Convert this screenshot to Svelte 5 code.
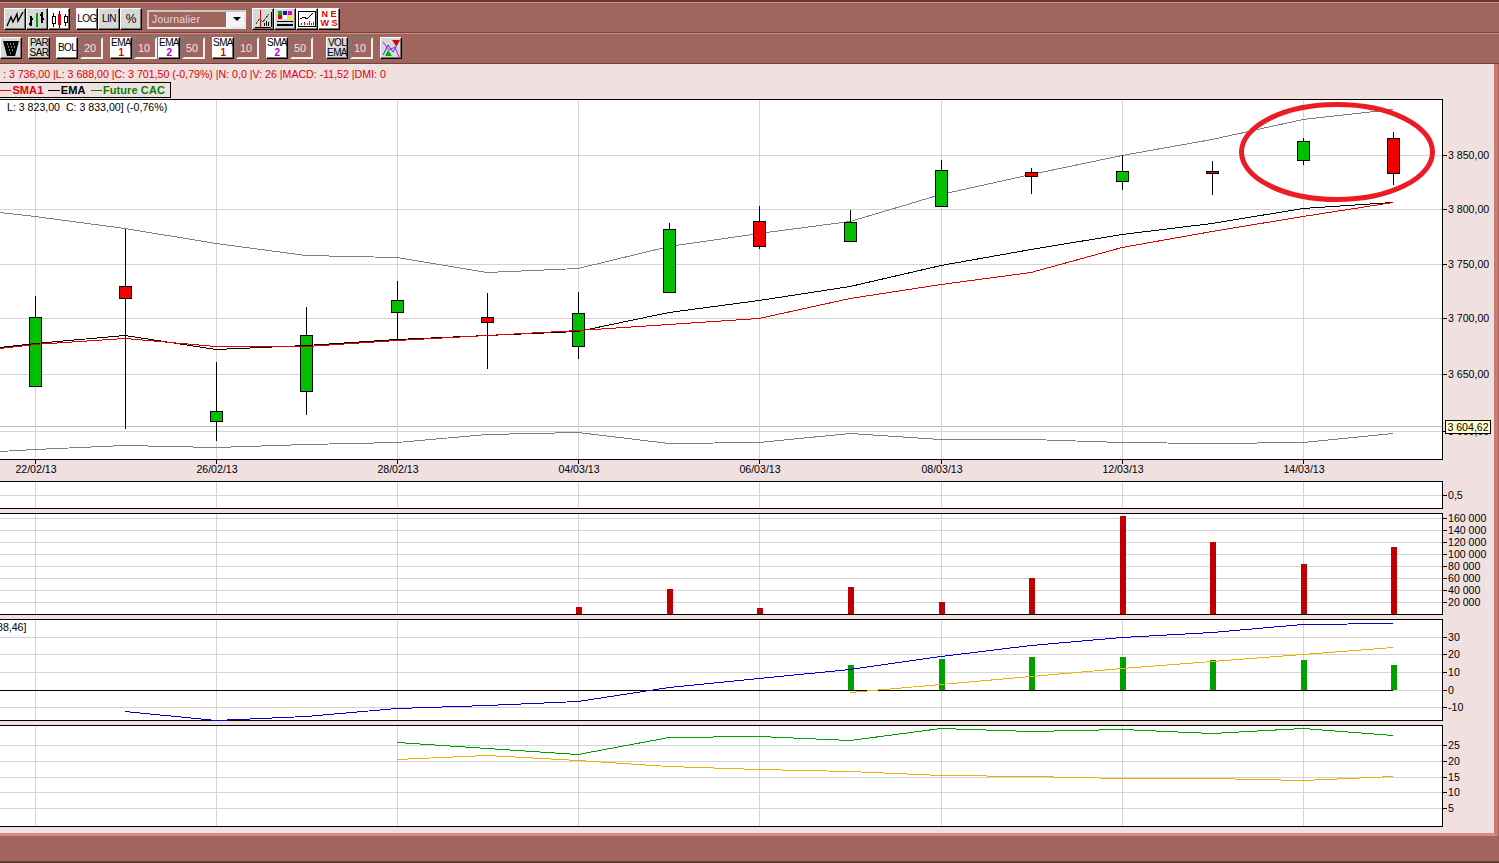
<script>
  // x position of each trading session, left to right
  const xs = [35, 125, 216, 306, 397, 487, 578, 669, 759, 850, 941, 1031, 1122, 1212, 1303, 1393];
  const gridX = [35, 216, 397, 578, 759, 941, 1122, 1303];
  const dates = ['22/02/13', '26/02/13', '28/02/13', '04/03/13', '06/03/13', '08/03/13', '12/03/13', '14/03/13'];

  // high, low, body top, body bottom, up?
  const candles = [
    [296, 386, 317, 386, 1], [229, 429, 286, 298, 0], [362, 441, 411, 421, 1], [307, 415, 335, 391, 1],
    [281, 340, 300, 312, 1], [293, 369, 317, 322, 0], [292, 359, 313, 346, 1], [223, 292, 229, 292, 1],
    [206, 249, 221, 246, 0], [210, 242, 222, 241, 1], [160, 207, 170, 206, 1], [168, 194, 172, 176, 0],
    [155, 190, 171, 181, 1], [161, 195, 171, 173, 0], [138, 165, 141, 160, 1], [132, 185, 138, 173, 0]
  ];

  const pts = (arr, from = 0) => arr.map((y, i) => `${xs[i + from]},${y + 0.5}`).join(' ');

  const bollUp = '0,212.5 ' + pts([216, 228, 243, 255, 257, 272, 268, 246, 233, 221, 194, 174, 155, 139, 119, 109]);
  const bollDown = '0,451.5 ' + pts([449, 445, 447, 444, 442, 434, 432, 443, 442, 433, 439, 439, 442, 443, 442, 433]);
  const ema = '0,347.5 ' + pts([343, 335, 349, 345, 339, 335, 331, 312, 300, 286, 265, 249, 234, 223, 208, 202]);
  const sma = '0,348.5 ' + pts([344, 338, 346, 346, 340, 335, 330, 324, 318, 298, 284, 272, 247, 231, 216, 202]);

  const volumes = [[578, 607], [669, 589], [759, 608], [850, 587], [941, 602], [1031, 578], [1122, 516], [1212, 542], [1303, 564], [1393, 547]];
  const macdBars = [[850, 665], [941, 659], [1031, 657], [1122, 657], [1212, 660], [1303, 660], [1393, 665]];
  const macd = pts([711, 720, 716, 708, 705, 701, 687, 678, 669, 656, 645, 637, 632, 624, 623], 1);
  const signal = pts([692, 684, 676, 668, 661, 654, 647], 9);
  const dmiUp = pts([742, 748, 754, 737, 736, 740, 728, 731, 729, 733, 728, 735], 4);
  const dmiDown = pts([759, 755, 760, 766, 769, 771, 775, 776, 778, 778, 780, 776], 4);

  const priceAxis = [[155, '3 850,00'], [209, '3 800,00'], [264, '3 750,00'], [318, '3 700,00'], [374, '3 650,00'], [431, '3 600,00']];
  const volAxis = [[518, '160 000'], [530, '140 000'], [542, '120 000'], [554, '100 000'], [566, '80 000'], [578, '60 000'], [590, '40 000'], [602, '20 000']];
  const macdAxis = [[637, '30'], [654, '20'], [672, '10'], [690, '0'], [707, '-10']];
  const dmiAxis = [[745, '25'], [761, '20'], [777, '15'], [792, '10'], [808, '5']];

  const indicators = [
    { name: 'EMA', sub: '1', color: '#e00000', value: '10' },
    { name: 'EMA', sub: '2', color: '#b000c0', value: '50' },
    { name: 'SMA', sub: '1', color: '#e00000', value: '10' },
    { name: 'SMA', sub: '2', color: '#b000c0', value: '50' }
  ];
</script>

{#snippet yAxis(rows)}
  {#each rows as [y, label]}
    <line x1="1442" x2="1447" y1={y + 0.5} y2={y + 0.5} class="tick" />
    <text x="1448" y={y + 4} class="axis">{label}</text>
  {/each}
{/snippet}

{#snippet grid(rows, top, bottom)}
  <rect x="-1" y={top + 0.5} width="1443.5" height={bottom - top} class="plot" />
  {#each rows as [y]}
    <line x1="0" x2="1442" y1={y + 0.5} y2={y + 0.5} class="grid" />
  {/each}
  {#each gridX as x}
    <line x1={x + 0.5} x2={x + 0.5} y1={top + 1} y2={bottom} class="grid" />
  {/each}
{/snippet}

<div class="app">
  <div class="toolbar first">
    <button class="btn icon" aria-label="Line chart">
      <svg viewBox="0 0 20 20" width="20" height="20"><path d="M2 17 L6 8 L8 13 L12 5 L13 12 L18 3" fill="none" stroke="#000" stroke-width="1.4" /></svg>
    </button>
    <button class="btn icon" aria-label="Bar chart">
      <svg viewBox="0 0 20 20" width="20" height="20" shape-rendering="crispEdges">
        <path d="M4 7 V17 M2 15 H4 M4 10 H6 M15 3 V14 M13 6 H15 M15 10 H17" stroke="#000" stroke-width="2" fill="none" />
        <rect x="9" y="4" width="2" height="14" fill="#00a000" />
      </svg>
    </button>
    <button class="btn icon white" aria-label="Candlestick chart">
      <svg viewBox="0 0 20 20" width="20" height="20" shape-rendering="crispEdges">
        <path d="M4.5 4 V18 M10.5 2 V19 M16.5 5 V17" stroke="#000" />
        <rect x="3.5" y="7.5" width="3" height="7" fill="#fff" stroke="#000" />
        <rect x="9" y="5" width="3" height="11" fill="#e00000" />
        <rect x="15.5" y="7.5" width="3" height="6" fill="#fff" stroke="#000" />
      </svg>
    </button>
    <div class="group scale">
      <button class="btn white">LOG</button>
      <button class="btn">LIN</button>
      <button class="btn percent">%</button>
    </div>
    <div class="period">
      <span>Journalier</span>
      <svg viewBox="0 0 8 4" width="8" height="4"><path d="M0 0 H8 L4 4 Z" fill="#000" /></svg>
    </div>
    <div class="group tools">
      <button class="btn icon" aria-label="Cursor">
        <svg viewBox="0 0 20 20" width="20" height="20" shape-rendering="crispEdges">
          <path d="M7.5 1 V19" stroke="#e00000" stroke-width="1" />
          <path d="M2 18 H18 M18 3 V18" stroke="#000" fill="none" />
          <path d="M3 15 L6 10 L10 13 L16 5" stroke="#555" fill="none" />
          <path d="M11 17 V14 M13 17 V12 M15 17 V13" stroke="#000" />
        </svg>
      </button>
      <button class="btn icon" aria-label="Colours">
        <svg viewBox="0 0 20 20" width="20" height="20" shape-rendering="crispEdges">
          <rect x="3" y="2" width="4" height="4" fill="#00b000" /><rect x="8" y="2" width="4" height="4" fill="#1010e0" /><rect x="13" y="2" width="4" height="4" fill="#e000e0" />
          <rect x="3" y="6" width="4" height="4" fill="#e00000" /><rect x="8" y="6" width="4" height="4" fill="#fff" /><rect x="13" y="6" width="4" height="4" fill="#f0f000" />
          <rect x="2" y="12" width="16" height="1" /><rect x="2" y="15" width="16" height="2" />
        </svg>
      </button>
      <button class="btn icon white" aria-label="Indicator">
        <svg viewBox="0 0 20 20" width="20" height="20" shape-rendering="crispEdges">
          <rect x="1.5" y="2.5" width="17" height="15" fill="#fff" stroke="#000" />
          <path d="M3 10 L7 8 L10 10 L16 4" stroke="#000" fill="none" />
          <path d="M4 16 V14 M7 16 V13 M10 16 V14 M12 16 V12 M14 16 V14 M16 16 V13" stroke="#e00000" />
        </svg>
      </button>
      <button class="btn white news"><span>N E</span><span>W S</span></button>
    </div>
  </div>

  <div class="toolbar second">
    <button class="btn icon trash" aria-label="Delete">
      <svg viewBox="0 0 20 20" width="20" height="20">
        <path d="M2 3 H18 L14 18 H6 Z" fill="#000" />
        <path d="M6 6 h1 M9 6 h1 M12 6 h1 M7 9 h1 M10 9 h1 M13 9 h1 M8 12 h1 M11 12 h1 M9 15 h1" stroke="#fff" />
      </svg>
    </button>
    <button class="btn two par">PAR<br />SAR</button>
    <button class="btn white bol">BOL</button>
    <div class="field">20</div>
    <div class="indicators">
      {#each indicators as ind}
        <button class="btn white two">{ind.name}<br /><b style="color: {ind.color}">{ind.sub}</b></button>
        <div class="field">{ind.value}</div>
      {/each}
    </div>
    <button class="btn two vol">VOL<br />EMA</button>
    <div class="field">10</div>
    <button class="btn icon cross" aria-label="Crossing">
      <svg viewBox="0 0 20 20" width="20" height="20">
        <path d="M2 4 L8 12 L14 9 L18 19" stroke="#e000e0" fill="none" />
        <path d="M2 17 L7 7 L12 14 L18 3" stroke="#2040e0" fill="none" />
        <path d="M11 2 H19 L15 8 Z" fill="#e00000" />
        <path d="M8 17 L4 11 L1 17 Z" fill="#00b000" transform="translate(3 1)" />
      </svg>
    </button>
  </div>

  <div class="work">
    <div class="status">: 3 736,00 |L: 3 688,00 |C: 3 701,50 (-0,79%) |N: 0,0 |V: 26 |MACD: -11,52 |DMI: 0</div>
    <div class="legend">
      <i class="dash red"></i><b class="red">SMA1</b>
      <i class="dash black"></i><b>EMA</b>
      <i class="dash green"></i><b class="green">Future CAC</b>
    </div>

    <div class="charts">
      <svg class="chart main" width="1494" height="382" viewBox="0 99 1494 382" shape-rendering="crispEdges">
        {@render grid(priceAxis, 99, 459)}
        <line x1="0" x2="1442" y1="426.5" y2="426.5" class="grid strong" />
        {@render yAxis(priceAxis)}
        {#each gridX as x, i}
          <line x1={x + 0.5} x2={x + 0.5} y1="459" y2="464" class="tick" />
          <text x={x + 1} y="473" class="axis mid">{dates[i]}</text>
        {/each}
        <polyline points={bollUp} class="series" stroke="#808080" />
        <polyline points={bollDown} class="series" stroke="#808080" />
        {#each candles as [high, low, top, bottom, up], i}
          <line x1={xs[i] + 0.5} x2={xs[i] + 0.5} y1={high} y2={low} class="tick" />
          <rect x={xs[i] - 6 + 0.5} y={top + 0.5} width="12" height={bottom - top} fill={up ? '#00c000' : '#f40000'} stroke="#000" />
        {/each}
        <polyline points={ema} class="series" stroke="#000" />
        <polyline points={sma} class="series" stroke="#e00000" />
        <text x="7" y="111" class="axis">L: 3 823,00  C: 3 833,00] (-0,76%)</text>
      </svg>

      <svg class="chart" width="1494" height="28" viewBox="0 481 1494 28" shape-rendering="crispEdges">
        {@render grid([[495, '0,5']], 481, 508)}
        {@render yAxis([[495, '0,5']])}
      </svg>

      <svg class="chart" width="1494" height="102" viewBox="0 513 1494 102" shape-rendering="crispEdges">
        {@render grid(volAxis, 513, 614)}
        {@render yAxis(volAxis)}
        {#each volumes as [x, y]}
          <rect x={x - 2} {y} width="6" height={614 - y} fill="#c00000" />
        {/each}
      </svg>

      <svg class="chart" width="1494" height="102" viewBox="0 619 1494 102" shape-rendering="crispEdges">
        {@render grid(macdAxis, 619, 720)}
        {@render yAxis(macdAxis)}
        <line x1="0" x2="1393" y1="690.5" y2="690.5" class="tick" />
        {#each macdBars as [x, y]}
          <rect x={x - 2} {y} width="6" height={690 - y} fill="#00a000" />
        {/each}
        <polyline points={macd} class="series" stroke="#0000d0" />
        <polyline points={signal} class="series" stroke="#f0b000" />
        <text x="-3" y="631" class="axis">88,46]</text>
      </svg>

      <svg class="chart" width="1494" height="102" viewBox="0 725 1494 102" shape-rendering="crispEdges">
        {@render grid(dmiAxis, 725, 826)}
        {@render yAxis(dmiAxis)}
        <polyline points={dmiUp} class="series" stroke="#00a000" />
        <polyline points={dmiDown} class="series" stroke="#f0b000" />
      </svg>

      <div class="last-price">3 604,62</div>
      <svg class="circle" width="200" height="104" viewBox="0 0 200 104">
        <ellipse cx="100" cy="52" rx="95.5" ry="47.5" fill="none" stroke="#ed1c24" stroke-width="5" />
      </svg>
    </div>
  </div>

  <div class="footer"></div>
</div>

<style>
  :global(body) {
    margin: 0;
    background: #a0665e;
  }

  .app {
    width: 1499px;
    height: 863px;
    overflow: hidden;
    display: flex;
    flex-direction: column;
    font-family: "Liberation Sans", Arial, sans-serif;
    font-size: 11px;
    background: #a0665e;
    box-sizing: border-box;
    border-top: 2px solid #5f3b36;
  }

  .toolbar {
    display: flex;
    align-items: center;
    height: 31px;
    box-sizing: border-box;
    flex: none;
    border-top: 1px solid #d98a80;
    border-bottom: 1px solid #6e443e;
  }

  .first {
    padding-left: 4px;
    padding-top: 3px;
  }

  .second {
    padding-bottom: 2px;
  }

  .btn {
    width: 22px;
    height: 22px;
    padding: 0;
    box-sizing: border-box;
    background: #d8d8d8;
    border: 1px solid;
    border-color: #fff #000 #000 #fff;
    box-shadow: inset -1px -1px 0 #777;
    font-family: "Liberation Sans", Arial, sans-serif;
    font-size: 10px;
    letter-spacing: -0.6px;
    line-height: 10px;
    color: #000;
    display: flex;
    align-items: center;
    justify-content: center;
    flex: none;
    text-align: center;
  }

  .btn.white {
    background: #fff;
  }

  .btn.two {
    display: block;
  }

  .btn.two b {
    font-weight: 700;
  }

  .btn.percent {
    font-size: 12px;
    letter-spacing: 0;
  }

  .group {
    display: flex;
  }

  .scale {
    margin-left: 6px;
  }

  .tools {
    margin-left: 6px;
  }

  .period {
    margin-left: 5px;
    width: 99px;
    height: 19px;
    box-sizing: border-box;
    border: 2px solid #e8e8e8;
    border-top-color: #c8c8c8;
    border-left-color: #c8c8c8;
    color: #e4d8d6;
    display: flex;
    align-items: center;
    justify-content: space-between;
    padding: 0 3px 0 3px;
    font-size: 10.5px;
    letter-spacing: 0.2px;
    background: linear-gradient(to right, #a0665e 77px, #f4f4f4 77px);
  }

  .btn.news {
    display: block;
    color: #e00000;
    font-weight: 700;
    font-size: 9px;
    line-height: 9px;
    letter-spacing: 0;
  }

  .news span {
    display: block;
  }

  .par,
  .bol {
    margin-left: 6px;
  }

  .field {
    width: 23px;
    height: 22px;
    box-sizing: border-box;
    margin-left: 2px;
    padding-left: 2px;
    border: 2px solid;
    border-color: #777 #f0f0f0 #f0f0f0 #777;
    color: #efe3e1;
    line-height: 18px;
    font-size: 11px;
    flex: none;
  }

  .indicators {
    display: flex;
    align-items: center;
    margin-left: 7px;
  }

  .indicators .field:nth-child(2) {
    margin-right: 1px;
  }

  .indicators .field:nth-child(4),
  .indicators .field:nth-child(6) {
    margin-right: 7px;
  }

  .vol {
    margin-left: 13px;
  }

  .cross {
    margin-left: 7px;
  }

  .work {
    flex: none;
    height: 772px;
    box-sizing: border-box;
    width: 1498px;
    background: #f0e0e0;
    border-right: 4px solid #c97a70;
    border-bottom: 3px solid #d98a80;
    display: flex;
    flex-direction: column;
  }

  .status {
    height: 18px;
    padding: 3px 0 0 3px;
    box-sizing: border-box;
    color: #e00000;
    font-size: 10.6px;
    line-height: 15px;
    white-space: pre;
  }

  .legend {
    display: flex;
    align-items: center;
    width: 171px;
    height: 16px;
    box-sizing: border-box;
    border: 1px solid #000;
    border-left: none;
    font-size: 11px;
    white-space: nowrap;
  }

  .legend b {
    margin-right: 5px;
    letter-spacing: 0.1px;
  }

  .dash {
    width: 12px;
    height: 1px;
    margin-right: 1px;
    background: #000;
  }

  .dash.red {
    background: #e00000;
  }

  .dash.green {
    background: #008000;
  }

  .red {
    color: #e00000;
  }

  .green {
    color: #008000;
  }

  .charts {
    position: relative;
    display: flex;
    flex-direction: column;
    gap: 4px;
    margin-top: 1px;
  }

  .chart {
    display: block;
    overflow: hidden;
  }

  .main {
    margin-bottom: -4px;
  }

  .plot {
    fill: #fff;
    stroke: #000;
  }

  .grid {
    stroke: #d4d4d4;
  }

  .grid.strong {
    stroke: #c0c0c0;
  }

  .tick {
    stroke: #000;
  }

  .series {
    fill: none;
  }

  .axis {
    font-size: 10.6px;
    fill: #000;
    white-space: pre;
    font-family: "Liberation Sans", Arial, sans-serif;
  }

  .mid {
    text-anchor: middle;
  }

  .last-price {
    position: absolute;
    left: 1445px;
    top: 321px;
    width: 46px;
    height: 14px;
    box-sizing: border-box;
    border: 1px solid #000;
    background: #ffffcc;
    font-size: 10.6px;
    line-height: 12px;
    text-align: center;
  }

  .circle {
    position: absolute;
    left: 1237px;
    top: 1px;
    overflow: visible;
  }

  .footer {
    flex: 1;
    border-bottom: 2px solid #5f3b36;
  }
</style>
